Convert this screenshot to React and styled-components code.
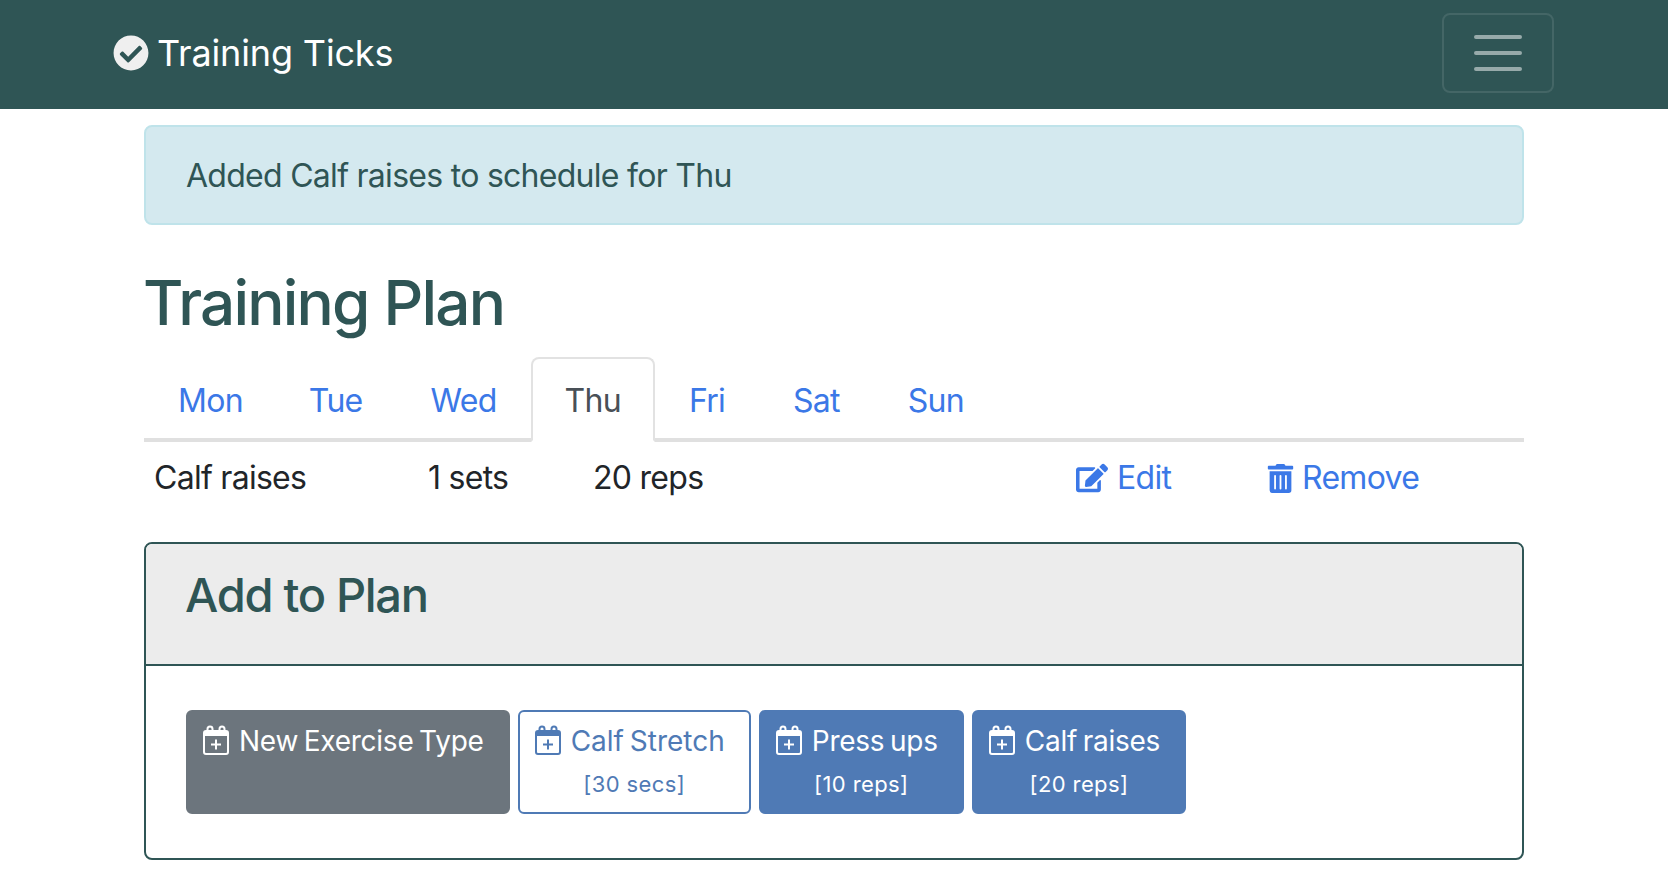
import styled, { createGlobalStyle } from "styled-components";
import { FaCheckCircle, FaEdit, FaTrashAlt } from "react-icons/fa";

const GlobalStyle = createGlobalStyle`
  html, body {
    margin: 0;
    background: #fff;
    font-family: Inter, "Noto Sans", sans-serif;
    font-size: 32px;
    line-height: 48px;
    letter-spacing: -0.72px;
    color: #212529;
  }
  * {
    box-sizing: border-box;
  }
`;

const Navbar = styled.nav`
  display: flex;
  justify-content: space-between;
  align-items: flex-start;
  height: 109px;
  padding: 13px 114px 0 113px;
  background: #2f5555;
`;

const Brand = styled.a`
  display: flex;
  align-items: center;
  gap: 8px;
  height: 80px;
  color: #fff;
  font-size: 36px;
  letter-spacing: -0.15px;
  svg {
    color: #efefef;
    font-size: 36px;
  }
`;

const Toggler = styled.button`
  display: flex;
  align-items: center;
  justify-content: center;
  width: 112px;
  height: 80px;
  padding: 0;
  background: transparent;
  border: 2px solid rgba(255, 255, 255, 0.1);
  border-radius: 8px;
`;

const Container = styled.main`
  width: 1380px;
  margin: 0 auto;
  padding-top: 16px;
`;

const Alert = styled.div`
  padding: 25px 40px 23px;
  background: #d4e9ef;
  border: 2px solid #bfe3ea;
  border-radius: 8px;
  color: #2f5555;
`;

const Title = styled.h1`
  margin: 39px 0 16px -1px;
  color: #2f5555;
  font-size: 62px;
  font-weight: 500;
  line-height: 77px;
  letter-spacing: -1.8px;
`;

const Tabs = styled.ul`
  display: flex;
  margin: 0;
  padding: 0;
  list-style: none;
  border-bottom: 4px solid #e0e0e0;
`;

const Tab = styled.li`
  margin-bottom: -4px;
  padding: 18px 32px 15px;
  color: ${({ $active }) => ($active ? "#495057" : "#3b78e7")};
  background: ${({ $active }) => ($active ? "#fff" : "transparent")};
  border: 2px solid ${({ $active }) => ($active ? "#e2e2e2" : "transparent")};
  border-bottom-color: ${({ $active }) => ($active ? "#fff" : "transparent")};
  border-radius: 8px 8px 0 0;
  &:first-child {
    padding-right: 30px;
  }
`;

const PlanRow = styled.div`
  display: grid;
  grid-template-columns: 274px 165px 483px 190px 1fr;
  align-items: center;
  padding: 12px 0 0 10px;
  margin-bottom: 40px;
`;

const ActionLink = styled.a`
  display: flex;
  align-items: center;
  gap: ${({ $gap }) => $gap}px;
  color: #3b78e7;
  svg {
    font-size: ${({ $iconSize }) => $iconSize}px;
  }
`;

const Card = styled.section`
  border: 2px solid #2f5555;
  border-radius: 8px;
  overflow: hidden;
`;

const CardHeader = styled.div`
  display: flex;
  align-items: center;
  height: 122px;
  padding: 0 39px 18px;
  background: #ececec;
  border-bottom: 2px solid #2f5555;
`;

const CardTitle = styled.h2`
  margin: 0;
  color: #2f5555;
  font-size: 47px;
  font-weight: 500;
  letter-spacing: -1.3px;
`;

const CardBody = styled.div`
  display: flex;
  gap: 8px;
  padding: 44px 40px;
`;

const variants = {
  secondary: "background: #6c757d; border-color: #6c757d; color: #fff;",
  primary: "background: #4f7ab5; border-color: #4f7ab5; color: #fff;",
  outline: "background: #fff; border-color: #4f7ab5; color: #4f7ab5; letter-spacing: 0;",
};

const ExerciseButton = styled.button`
  display: flex;
  flex-direction: column;
  justify-content: flex-start;
  height: 104px;
  padding: 8px 15px 6px;
  border: 2px solid;
  border-radius: 6px;
  font-family: inherit;
  font-size: 28px;
  line-height: 42px;
  letter-spacing: -0.25px;
  word-spacing: -2px;
  ${({ $variant }) => variants[$variant]}
`;

const ButtonTitle = styled.span`
  display: flex;
  align-items: center;
  gap: 10px;
  margin-right: 9px;
  svg {
    flex: none;
    margin-top: -3px;
  }
`;

const ButtonNote = styled.span`
  display: block;
  margin-top: 4px;
  font-size: 22px;
  line-height: 36px;
  letter-spacing: 0.4px;
  word-spacing: 0;
  text-align: center;
`;

function CalendarPlus() {
  return (
    <svg width="26" height="30" viewBox="0 0 26 30" fill="none" stroke="currentColor" strokeWidth="2">
      <rect x="1" y="6" width="24" height="23" rx="2" />
      <rect x="1" y="7" width="24" height="4" fill="currentColor" stroke="none" />
      <path d="M4.5 8V4a2.5 2.5 0 0 1 5 0v4M16.5 8V4a2.5 2.5 0 0 1 5 0v4" />
      <path d="M13 14.5v10M8 19.5h10" />
    </svg>
  );
}

const days = ["Mon", "Tue", "Wed", "Thu", "Fri", "Sat", "Sun"];

const exercises = [
  { name: "New Exercise Type", variant: "secondary" },
  { name: "Calf Stretch", note: "[30 secs]", variant: "outline" },
  { name: "Press ups", note: "[10 reps]", variant: "primary" },
  { name: "Calf raises", note: "[20 reps]", variant: "primary" },
];

export default function App() {
  return (
    <>
      <GlobalStyle />
      <Navbar>
        <Brand>
          <FaCheckCircle />
          Training Ticks
        </Brand>
        <Toggler aria-label="Toggle navigation">
          <svg width="60" height="60" viewBox="0 0 60 60">
            <path
              d="M8 14h44M8 30h44M8 46h44"
              stroke="rgba(255,255,255,0.5)"
              strokeWidth="4"
              strokeLinecap="round"
            />
          </svg>
        </Toggler>
      </Navbar>
      <Container>
        <Alert>Added Calf raises to schedule for Thu</Alert>
        <Title>Training Plan</Title>
        <Tabs>
          {days.map((day) => (
            <Tab key={day} $active={day === "Thu"}>
              {day}
            </Tab>
          ))}
        </Tabs>
        <PlanRow>
          <span>Calf raises</span>
          <span>1 sets</span>
          <span>20 reps</span>
          <ActionLink $iconSize={32} $gap={9}>
            <FaEdit />
            Edit
          </ActionLink>
          <ActionLink $iconSize={29} $gap={7}>
            <FaTrashAlt />
            Remove
          </ActionLink>
        </PlanRow>
        <Card>
          <CardHeader>
            <CardTitle>Add to Plan</CardTitle>
          </CardHeader>
          <CardBody>
            {exercises.map((item) => (
              <ExerciseButton key={item.name} $variant={item.variant}>
                <ButtonTitle>
                  <CalendarPlus />
                  {item.name}
                </ButtonTitle>
                {item.note && <ButtonNote>{item.note}</ButtonNote>}
              </ExerciseButton>
            ))}
          </CardBody>
        </Card>
      </Container>
    </>
  );
}
